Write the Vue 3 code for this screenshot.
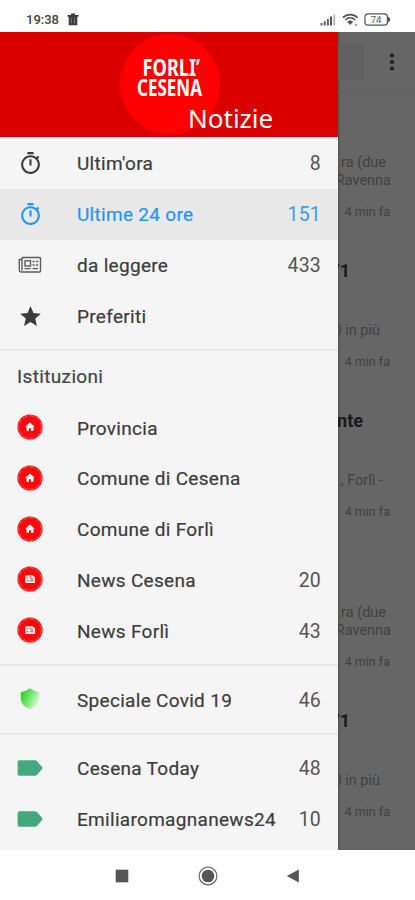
<template>
  <div class="screen">
    <header class="status">
      <span class="clock">19:38</span>
      <svg class="trash" width="12" height="13" viewBox="0 0 12 13">
        <path d="M0.5 2h11v1.8h-11zM4 0.5h4v1.5h-4zM1.7 3.8h8.6v8.4h-8.6z" fill="#3c3c3c" />
        <path d="M4.4 5v5.5M7.6 5v5.5" stroke="#8a8a8a" stroke-width="0.8" />
      </svg>
      <div class="status-right">
        <svg width="17" height="12" viewBox="0 0 17 12">
          <path d="M0.5 9h2v2.5h-2zM3.7 7.2h2v4.3h-2zM6.9 5h2v6.5h-2z" fill="#666" />
          <path d="M10 2.6h2v8.9h-2z" fill="#555" />
          <path d="M13.5 0.6h1.6v10.900h-1.600z" fill="#aaa" />
        </svg>
        <svg width="17" height="14" viewBox="0 0 17 14">
          <g fill="none" stroke="#555" stroke-width="1.7">
            <path d="M1 4.600C5 0.600 11.500 0.600 15.500 4.600" />
            <path d="M3.300 7C6.200 4.200 10.300 4.200 13.200 7" />
          </g>
          <path d="M5.300 8.700Q8.200 6.300 11.100 8.700L8.200 12z" fill="#555" />
          <circle cx="14" cy="12" r="1.200" fill="#aaa" />
        </svg>
        <svg width="27" height="13" viewBox="0 0 27 13">
          <rect x="0.900" y="0.900" width="22.500" height="11.200" rx="2.800" fill="none" stroke="#555" stroke-width="1.200" />
          <path d="M24 3.800l2 1.200v3l-2 1.200z" fill="#555" />
          <text x="12" y="10" text-anchor="middle" class="battery">74</text>
        </svg>
      </div>
    </header>

    <main class="body">
      <nav class="drawer">
        <div class="banner">
          <div class="disc">
            <div class="brand">
              <span class="forli">FORLI’</span>
              <span class="cesena">CESENA</span>
            </div>
          </div>
          <span class="notizie">Notizie</span>
        </div>
        <section v-for="(group, g) in groups" :key="g" class="group">
          <h2 v-if="group.title">{{ group.title }}</h2>
          <a v-for="item in group.items" :key="item.label" class="item" :class="{ active: item.active }">
            <span class="icon">
              <svg v-if="item.icon === 'timer'" width="25" height="25" viewBox="0 0 24 24">
                <path fill="currentColor" d="M15 1H9v2h6V1zm-4 13h2V8h-2v6zm8.030-6.610l1.420-1.420c-.43-.51-.9-.99-1.410-1.410l-1.420 1.420C16.070 4.740 14.120 4 12 4c-4.970 0-9 4.030-9 9s4.020 9 9 9 9-4.030 9-9c0-2.120-.74-4.070-1.970-5.610zM12 20c-3.870 0-7-3.130-7-7s3.130-7 7-7 7 3.130 7 7-3.130 7-7 7z" />
              </svg>
              <svg v-else-if="item.icon === 'paper'" class="paper" width="24" height="18" viewBox="0 0 24 18">
                <g fill="none" stroke="currentColor" stroke-width="1.400">
                  <path d="M4 1.500h17.500a1 1 0 0 1 1 1v12.500a1 1 0 0 1-1 1H3a2 2 0 0 1-1.700-2V3.500H4" />
                  <path d="M4 1.500v13" />
                  <rect x="7" y="4.800" width="5.500" height="5.200" />
                  <path d="M14.500 5.500h2.200M18 5.500h2.200M14.500 9h2.200M18 9h2.200M6.500 12.600h6M14.500 12.600h5.500" />
                </g>
              </svg>
              <svg v-else-if="item.icon === 'star'" width="25" height="25" viewBox="0 0 24 24">
                <path fill="currentColor" d="M12 17.270L18.180 21l-1.640-7.030L22 9.240l-7.190-.61L12 2 9.190 8.630 2 9.240l5.460 4.730L5.820 21z" />
              </svg>
              <svg v-else-if="item.icon === 'home' || item.icon === 'news'" class="round" width="26" height="26" viewBox="0 0 26 26">
                <circle cx="13" cy="13" r="12.600" fill="#fa0a0c" />
                <circle cx="13" cy="13" r="11.300" fill="none" stroke="#ff8c8c" stroke-width="0.600" stroke-dasharray="5 1.500" />
                <path v-if="item.icon === 'home'" fill="#fff" d="M13 8.600l4.700 4.200h-1.200v4h-2.500v-2.600h-2v2.600h-2.500v-4H8.300z" />
                <g v-else>
                  <path fill="#ffe9e9" d="M8.300 9.300h7.200l2.500 2v5.700H8.300z" />
                  <path fill="none" stroke="#fa3a3a" stroke-width="1" d="M10 11v1.500M12.300 11h2M10 14.600h1.500M13.400 14.600h2.800M13.400 12.700h2.800" />
                </g>
              </svg>
              <svg v-else-if="item.icon === 'shield'" class="round" width="20" height="22" viewBox="0 0 20 22">
                <defs>
                  <linearGradient id="shield" x1="0" y1="0.200" x2="1" y2="0.800">
                    <stop offset="0.100" stop-color="#35d32c" />
                    <stop offset="0.500" stop-color="#7ee878" />
                    <stop offset="1" stop-color="#effbee" />
                  </linearGradient>
                </defs>
                <path fill="url(#shield)" d="M10 0.300Q14.500 3.600 19.200 4.200V11Q19 17.500 10 21.500Q1 17.500 0.800 11V4.200Q5.500 3.600 10 0.300z" />
              </svg>
              <svg v-else class="round" width="26" height="16" viewBox="0 0 26 16">
                <path fill="#43a87c" d="M2.500 0.300h15.700q1 0 1.800.8l5.400 6.300q.5.600 0 1.200l-5.400 6.300q-.8.800-1.800.8H2.500Q.8 15.700.6 14V2Q.8.300 2.500.3z" />
              </svg>
            </span>
            <span class="label">{{ item.label }}</span>
            <span class="count">{{ item.count }}</span>
          </a>
        </section>
      </nav>

      <div class="feed">
        <div class="toolbar">
          <div class="tab"></div>
          <svg width="6" height="18" viewBox="0 0 6 18" fill="#202020">
            <circle cx="3" cy="2.500" r="2.100" />
            <circle cx="3" cy="9" r="2.100" />
            <circle cx="3" cy="15.500" r="2.100" />
          </svg>
        </div>
        <article v-for="(post, i) in posts" :key="i">
          <h3 :style="{ paddingRight: post.titleEnd + 'px' }">{{ post.title }}</h3>
          <p v-for="(line, n) in post.lines" :key="n" :style="{ paddingRight: line.end + 'px' }">{{ line.text }}</p>
          <time>4 min fa</time>
        </article>
      </div>
    </main>

    <footer class="navbar">
      <svg width="14" height="14" viewBox="0 0 14 14"><rect x="0.700" y="0.700" width="12.600" height="12.600" fill="#555" /></svg>
      <svg width="20" height="20" viewBox="0 0 20 20">
        <circle cx="10" cy="10" r="8.900" fill="none" stroke="#666" stroke-width="1.200" />
        <circle cx="10" cy="10" r="6.300" fill="#555" />
      </svg>
      <svg width="14" height="14" viewBox="0 0 14 14"><path d="M12.800 0.500v13L0.800 7z" fill="#555" /></svg>
    </footer>
  </div>
</template>

<script setup>
import { ref } from 'vue';

const groups = ref([
  {
    items: [
      { icon: 'timer', label: "Ultim'ora", count: 8 },
      { icon: 'timer', label: 'Ultime 24 ore', count: 151, active: true },
      { icon: 'paper', label: 'da leggere', count: 433 },
      { icon: 'star', label: 'Preferiti' },
    ],
  },
  {
    title: 'Istituzioni',
    items: [
      { icon: 'home', label: 'Provincia' },
      { icon: 'home', label: 'Comune di Cesena' },
      { icon: 'home', label: 'Comune di Forlì' },
      { icon: 'news', label: 'News Cesena', count: 20 },
      { icon: 'news', label: 'News Forlì', count: 43 },
    ],
  },
  {
    items: [{ icon: 'shield', label: 'Speciale Covid 19', count: 46 }],
  },
  {
    items: [
      { icon: 'tag', label: 'Cesena Today', count: 48 },
      { icon: 'tag', label: 'Emiliaromagnanews24', count: 10 },
    ],
  },
]);

// "end" is the free space left after the last word of the line
const ravenna = { title: '', titleEnd: 0, lines: [{ text: 'ra (due', end: 29 }, { text: 'Ravenna', end: 24 }] };
const piu = { title: '/1', titleEnd: 65, lines: [{ text: '', end: 0 }, { text: '0 in più', end: 35 }] };
const forli = { title: 'nte', titleEnd: 52, lines: [{ text: '', end: 0 }, { text: ', Forlì -', end: 32 }] };
const posts = [ravenna, piu, forli, ravenna, piu];
</script>

<style>
body {
  margin: 0;
  background: #fff;
}
</style>

<style scoped>
.screen {
  width: 415px;
  height: 900px;
  display: flex;
  flex-direction: column;
  overflow: hidden;
  background: #fefefe;
  font-family: Roboto, "Liberation Sans", sans-serif;
}
svg {
  display: block;
  flex: none;
}
.status {
  height: 32px;
  box-sizing: border-box;
  padding: 7px 24px 0 26px;
  display: flex;
  align-items: center;
}
.clock {
  width: 41px;
  font-size: 13px;
  font-weight: 500;
  color: #444;
}
.status-right {
  margin-left: auto;
  display: flex;
  align-items: center;
  gap: 5px;
}
.battery {
  font-size: 9.500px;
  fill: #555;
}
.body {
  height: 818px;
  display: flex;
}
.drawer {
  width: 338px;
  flex: none;
  overflow: hidden;
  background: #f5f5f5;
}
.banner {
  height: 105px;
  display: grid;
  background: #db0000;
  border-bottom: 1px solid #fbeae8;
}
.disc {
  grid-area: 1 / 1;
  width: 100px;
  height: 100px;
  margin: 2px 0 0 120px;
  border-radius: 50%;
  background: #fe0000;
}
.brand {
  padding: 23px 0 0 17px;
  display: flex;
  flex-direction: column;
  font: bold 23px/20px "Noto Sans", "Open Sans", sans-serif;
  color: #fff;
  white-space: nowrap;
}
.brand span {
  transform-origin: left;
}
.forli {
  padding-left: 7px;
  transform: scaleX(0.790);
}
.cesena {
  transform: scaleX(0.740);
}
.notizie {
  grid-area: 1 / 1;
  align-self: end;
  padding: 0 0 2px 188px;
  font: 26px/34px "Noto Sans", "Open Sans", sans-serif;
  color: #fff;
}
.group {
  padding-bottom: 8px;
}
.group + .group {
  border-top: 2px solid #e8e8e8;
  padding-top: 8px;
}
.group:nth-of-type(2) {
  padding-top: 0;
}
h2 {
  margin: 0;
  padding-left: 17px;
  font-size: 19px;
  font-weight: 400;
  line-height: 52px;
  height: 51px;
  letter-spacing: 0.350px;
  color: #444;
  -webkit-text-stroke: 0.200px;
}
.item {
  height: 50.800px;
  box-sizing: border-box;
  padding: 1px 17px 0;
  display: flex;
  align-items: center;
  font-size: 19px;
  color: #3c3c3c;
}
.icon {
  width: 26px;
  margin-right: 34px;
  display: flex;
  justify-content: center;
}
.round {
  margin-top: -2px;
}
.label {
  flex: 1;
  letter-spacing: 0.300px;
  white-space: nowrap;
  -webkit-text-stroke: 0.200px;
}
.count {
  font-size: 19.500px;
  letter-spacing: 0.200px;
  color: #555;
}
.active {
  background: #e8e8e8;
  color: #2196f3;
}
.active .count {
  color: #3f9de6;
}
.paper {
  color: #5c5c5c;
}
.feed {
  flex: 1;
  min-width: 0;
  overflow: hidden;
  background: #666;
  box-shadow: inset 3px 0 3px -2px #505050;
}
.toolbar {
  height: 59px;
  border-bottom: 1px solid #5c5c5c;
  display: flex;
  align-items: center;
  justify-content: space-between;
  padding-right: 20px;
}
.tab {
  width: 26px;
  height: 36px;
  background: #616161;
}
article {
  height: 150px;
  display: flex;
  flex-direction: column;
  align-items: flex-end;
  white-space: nowrap;
}
h3 {
  height: 62px;
  margin: 0;
  font-size: 18px;
  font-weight: 700;
  line-height: 58px;
  color: #1a1a1a;
}
p {
  height: 18px;
  margin: 0;
  font-size: 14.500px;
  line-height: 18px;
  color: #414141;
}
time {
  padding-right: 25px;
  font-size: 12.500px;
  line-height: 43px;
  color: #404040;
}
.navbar {
  flex: 1;
  padding: 1px 115px 0;
  display: flex;
  align-items: center;
  justify-content: space-between;
}
</style>
